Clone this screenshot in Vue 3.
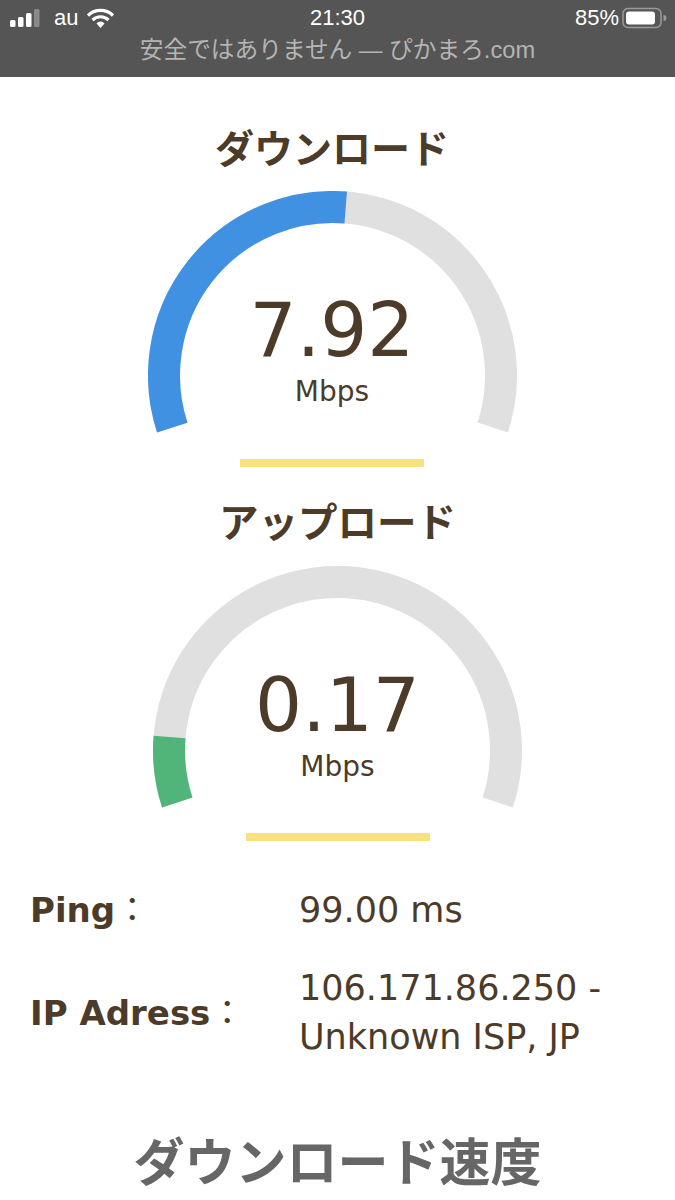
<script setup>
const R = 168.5
const polar = (deg) => {
  // deg measured clockwise from the left end of the gauge (18 degrees below horizontal)
  const a = ((162 + deg) * Math.PI) / 180
  return [R + 16 + R * Math.cos(a), R + 16 + R * Math.sin(a)]
}
const arc = (from, to) => {
  const [x1, y1] = polar(from)
  const [x2, y2] = polar(to)
  const large = to - from > 180 ? 1 : 0
  return `M${x1.toFixed(2)} ${y1.toFixed(2)}A${R} ${R} 0 ${large} 1 ${x2.toFixed(2)} ${y2.toFixed(2)}`
}
const gauges = [
  { title: 'ダウンロード', value: '7.92', color: '#4091e2', sweep: 112.5, cls: 'down' },
  { title: 'アップロード', value: '0.17', color: '#51b57a', sweep: 22.6, cls: 'up' },
]
</script>

<template>
  <main class="page">
    <header class="status">
      <div class="status-row">
        <div class="left">
          <svg class="signal" width="32" height="18" viewBox="0 0 32 18">
            <rect x="1" y="11" width="5.5" height="7" rx="1.5" fill="#fff" />
            <rect x="9" y="8" width="5.5" height="10" rx="1.5" fill="#fff" />
            <rect x="17" y="4" width="5.5" height="14" rx="1.5" fill="#fff" />
            <rect x="25" y="0" width="5.5" height="18" rx="1.5" fill="#8a8a8a" />
          </svg>
          <span class="carrier">au</span>
          <svg class="wifi" width="27" height="20" viewBox="0 0 27 20">
            <path d="M1 7.5a18 18 0 0 1 25 0" fill="none" stroke="#fff" stroke-width="3.2" />
            <path d="M5.5 12a11.5 11.5 0 0 1 16 0" fill="none" stroke="#fff" stroke-width="3.2" />
            <path d="M9.5 15.5a5 5 0 0 1 8 0L13.5 20Z" fill="#fff" />
          </svg>
        </div>
        <span class="clock">21:30</span>
        <div class="right">
          <span>85%</span>
          <svg width="45" height="22" viewBox="0 0 45 22">
            <rect x="1" y="1.5" width="38" height="19" rx="5" fill="none" stroke="#9a9a9a" stroke-width="1.5" />
            <rect x="4" y="4.5" width="29" height="13" rx="3" fill="#fff" />
            <path d="M41.5 8a3 3 0 0 1 0 6Z" fill="#9a9a9a" />
          </svg>
        </div>
      </div>
      <div class="address">安全ではありません — ぴかまろ.com</div>
    </header>

    <section v-for="g in gauges" :key="g.cls" class="meter" :class="g.cls">
      <h2>{{ g.title }}</h2>
      <div class="gauge">
        <svg width="369" height="250" viewBox="0 0 369 250">
          <path :d="arc(0, 216)" fill="none" stroke="#e0e0e0" stroke-width="32" />
          <path :d="arc(0, g.sweep)" fill="none" :stroke="g.color" stroke-width="32" />
        </svg>
        <div class="reading">
          <div class="value">{{ g.value }}</div>
          <div class="unit">Mbps</div>
        </div>
      </div>
      <div class="rule"></div>
    </section>

    <dl class="info">
      <div class="info-row">
        <dt>Ping<span class="colon">：</span></dt>
        <dd>99.00 ms</dd>
      </div>
      <div class="info-row">
        <dt>IP Adress<span class="colon">：</span></dt>
        <dd>106.171.86.250 -<br />Unknown ISP, JP</dd>
      </div>
    </dl>

    <h1 class="speed">ダウンロード速度</h1>
  </main>
</template>

<style scoped>
.page {
  width: 675px;
  height: 1200px;
  overflow: hidden;
  background: #fff;
  color: #4b3b28;
  font-family: "DejaVu Sans", "Noto Sans CJK JP", sans-serif;
}
.status {
  height: 77px;
  background: #555;
  font-family: "Liberation Sans", "Noto Sans CJK JP", sans-serif;
  color: #fff;
  box-sizing: border-box;
  padding-top: 4px;
}
.status-row {
  display: grid;
  grid-template-columns: 1fr auto 1fr;
  align-items: center;
  height: 26px;
  font-size: 22px;
}
.left {
  display: flex;
  align-items: center;
  padding-left: 9px;
}
.carrier {
  margin-left: 13px;
}
.wifi {
  margin-left: 9px;
}
.clock {
  padding-top: 1px;
}
.right {
  display: flex;
  justify-content: flex-end;
  align-items: center;
  gap: 3px;
  padding-right: 8px;
}
.address {
  text-align: center;
  font-size: 23.7px;
  line-height: 30px;
  color: #b4b4b4;
  margin-top: 5px;
}
.meter {
  display: flex;
  flex-direction: column;
  align-items: center;
}
.meter.down {
  margin-left: -11px;
  padding-top: 45px;
}
.meter.up {
  padding-top: 29px;
}
h2 {
  margin: 0;
  font-size: 39px;
  line-height: 48px;
  font-weight: 700;
  font-family: "Noto Sans CJK JP", sans-serif;
}
.up h2 {
  font-size: 39.5px;
}
.gauge {
  position: relative;
  width: 369px;
  height: 250px;
  margin-top: 21px;
}
.up .gauge {
  margin-top: 22px;
}
.gauge svg {
  display: block;
}
.reading {
  position: absolute;
  left: 0;
  right: 0;
  top: 97px;
  text-align: center;
}
.value {
  font-size: 74px;
  line-height: 84px;
}
.unit {
  font-size: 28px;
  line-height: 36px;
  margin-top: 2px;
}
.rule {
  width: 184px;
  height: 8px;
  background: #fae17f;
  margin-top: 18px;
}
.up .rule {
  margin-top: 17px;
}
.info {
  margin: 44px 0 0;
  padding: 0 30px;
}
.info-row {
  display: grid;
  grid-template-columns: 270px 1fr;
  align-items: center;
  margin-bottom: 28px;
}
dt {
  font-weight: 700;
  font-size: 34px;
  line-height: 46px;
  white-space: nowrap;
  padding-bottom: 3px;
}
.colon {
  font-family: "Noto Sans CJK JP", sans-serif;
  font-weight: 400;
}
dd {
  margin: 0 0 0 -1px;
  font-size: 35px;
  line-height: 49px;
}
.speed {
  margin: 65px 0 0;
  text-align: center;
  font-size: 51px;
  line-height: 64px;
  font-weight: 700;
  color: #666;
  font-family: "Noto Sans CJK JP", sans-serif;
}
</style>
